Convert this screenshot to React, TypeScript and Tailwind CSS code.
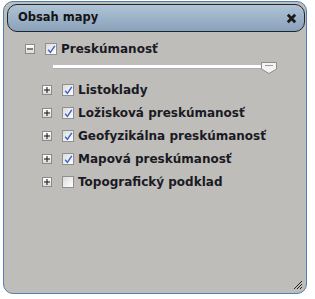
import React from 'react';

const font = { fontFamily: '"DejaVu Sans", Verdana, sans-serif' };

const Toggle = ({ open }: { open?: boolean }) => (
  <span className="w-[10px] h-[10px] border border-[#8a8a8a] bg-gradient-to-b from-white to-[#dcdcdc] flex items-center justify-center shrink-0">
    <svg width="6" height="6" viewBox="0 0 6 6">
      <rect x="0" y="2.5" width="6" height="1" fill="#111" />
      {!open && <rect x="2.5" y="0" width="1" height="6" fill="#111" />}
    </svg>
  </span>
);

const Check = ({ checked }: { checked?: boolean }) => (
  <span className="w-[12px] h-[12px] border border-[#8e8f8f] bg-gradient-to-br from-[#dcdcdc] to-white flex items-center justify-center shrink-0">
    {checked && (
      <svg width="9" height="9" viewBox="0 0 9 9">
        <path d="M1.2 4.8 L3.4 7.4 L7.8 0.8" stroke="#3c5fd0" strokeWidth="1.4" fill="none" />
      </svg>
    )}
  </span>
);

const layers = [
  { name: 'Listoklady', checked: true },
  { name: 'Ložisková preskúmanosť', checked: true },
  { name: 'Geofyzikálna preskúmanosť', checked: true },
  { name: 'Mapová preskúmanosť', checked: true },
  { name: 'Topografický podklad', checked: false },
];

export default function App() {
  return (
    <div className="w-[315px] h-[299px] bg-white pt-[1px] pl-[3px]" style={font}>
      <div className="relative w-[304px] h-[293px] border border-[#4f80b5] rounded-[10px] bg-[#bebdb9]">
        <div className="mt-[2px] ml-[3px] mr-[1px] h-[28px] rounded-[10px] border border-[#1d2833] bg-gradient-to-b from-[#afc3d6] to-[#8aa2ba] flex items-center justify-between pl-[10px] pr-[7px]">
          <span className="text-[11.5px] font-bold text-[#141414]">Obsah mapy</span>
          <svg width="11" height="11" viewBox="0 0 11 11">
            <path d="M1.8 1.8 L9.2 9.2 M9.2 1.8 L1.8 9.2" stroke="#1a1a1a" strokeWidth="2.8" />
          </svg>
        </div>

        <div className="pl-[21px] pt-[10px]">
          <div className="flex items-center h-[14px]">
            <Toggle open />
            <span className="ml-[10px]"><Check checked /></span>
            <span className="ml-[4px] text-[12px] font-bold text-[#1a1a24]">Preskúmanosť</span>
          </div>

          <div className="relative ml-[28px] mt-[6px] w-[225px] h-[12px]">
            <div className="absolute left-0 right-[6px] top-[3px] h-[4px] bg-white border-b border-[#a9aebb]" />
            <svg className="absolute left-[208px] top-0" width="16" height="12" viewBox="0 0 16 12">
              <path d="M0.5 0.5 H15.5 V7 L8 11.5 L0.5 7 Z" fill="#f4f4f4" stroke="#8c8c8c" />
              <rect x="4" y="3" width="8" height="1" fill="#9a9a9a" />
            </svg>
          </div>

          <div className="ml-[17px] mt-[9px] flex flex-col gap-[9px]">
            {layers.map((l) => (
              <div key={l.name} className="flex items-center h-[14px]">
                <Toggle />
                <span className="ml-[10px]"><Check checked={l.checked} /></span>
                <span className="ml-[4px] text-[12px] font-bold text-[#1a1a24]">{l.name}</span>
              </div>
            ))}
          </div>
        </div>

        <svg className="absolute right-[3px] bottom-[3px]" width="11" height="11" viewBox="0 0 11 11">
          <path d="M10 2 L2 10 M10 5 L5 10 M10 8 L8 10" stroke="#222" strokeWidth="1" />
        </svg>
      </div>
    </div>
  );
}
